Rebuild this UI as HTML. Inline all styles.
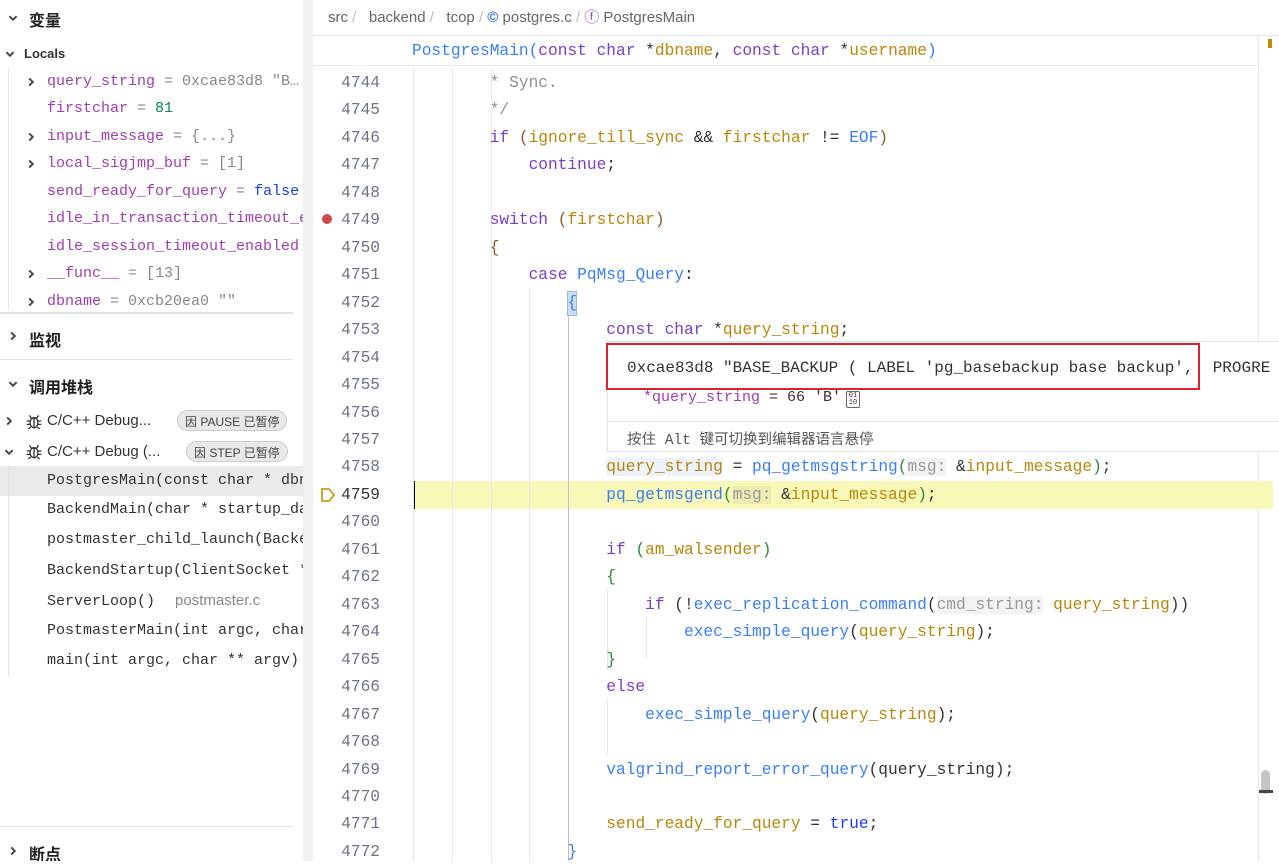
<!DOCTYPE html>
<html><head><meta charset="utf-8"><style>
*{margin:0;padding:0;box-sizing:border-box}
body{width:1279px;height:861px;overflow:hidden;background:#fff;position:relative;font-family:"Liberation Sans","Noto Sans CJK SC",sans-serif;color:#333}
.mono{font-family:"Liberation Mono","Noto Sans CJK SC",monospace}
.abs{position:absolute;white-space:pre}
#side{position:absolute;left:0;top:0;width:303px;height:861px;overflow:hidden}
#split{position:absolute;left:303px;top:0;width:10px;height:861px;background:#f0f0f3}
.h{font-size:16px;font-weight:bold;color:#222}
.var{font-size:15px;color:#a03cb0}
.g{color:#888}
.sep{position:absolute;height:1px;background:#dde0e6;left:0;width:293px}
.frame{font-size:15px;color:#333}
.pill{position:absolute;height:21px;border:1px solid #ccc;border-radius:11px;background:#e8e8ea;font-size:12px;color:#444;padding:2px 7px;white-space:nowrap}
#code{position:absolute;left:313px;top:70px;width:966px;font-size:16.2px;line-height:27.46px}
.ln{position:absolute;left:0;width:67px;text-align:right;color:#6b7585}
.tx{position:absolute;left:99px;white-space:pre}
.kw{color:#7a3fc2}.fn{color:#3b7ef0}.pa{color:#b8860b}.cm{color:#8a8f98}.br{color:#8b5a2b}.num{color:#098658}.bl{color:#1a3fe0}.gr{color:#2e8b3a}.hint{color:#999;background:#f3f3f3}
.guide{position:absolute;top:68px;width:1px;height:793px;background:#e4e7ee}
svg.cv{position:absolute}
</style></head><body>
<svg width="0" height="0" style="position:absolute"><defs>
<symbol id="dn" viewBox="0 0 10 10"><path d="M2 3.5L5 6.5L8 3.5" fill="none" stroke="#444" stroke-width="1.6"/></symbol>
<symbol id="rt" viewBox="0 0 10 10"><path d="M3.5 2L6.5 5L3.5 8" fill="none" stroke="#444" stroke-width="1.6"/></symbol>
<symbol id="bug" viewBox="0 0 16 16"><g fill="none" stroke="#333" stroke-width="1.2"><ellipse cx="8" cy="9.5" rx="3.5" ry="4.5"/><path d="M8 5v9M4.5 8H1.5M11.5 8h3M4.5 11H1.5M11.5 11h3M5 13.5l-2 1.5M11 13.5l2 1.5M5.5 5.5L4 3M10.5 5.5L12 3M6 5.5h4"/></g></symbol>
</defs></svg>
<div id="side">
 <svg class="cv" style="left:7px;top:12px" width="12" height="12"><use href="#dn"/></svg>
 <div class="abs h" style="left:29px;top:7px">变量</div>
 <svg class="cv" style="left:4px;top:48px" width="12" height="12"><use href="#dn"/></svg>
 <div class="abs" style="left:24px;top:46px;font-size:13px;font-weight:bold;color:#333">Locals</div>
 <div class="abs" style="left:8px;top:68px;width:1px;height:242px;background:#e6e6e6"></div>
 <svg class="cv" style="left:25px;top:76px" width="12" height="12"><use href="#rt"/></svg>
 <div class="abs mono var" style="left:47px;top:73px">query_string <span class="g">= 0xcae83d8 "B…</span></div>
 <div class="abs mono var" style="left:47px;top:100px">firstchar <span class="g">=</span> <span class="num">81</span></div>
 <svg class="cv" style="left:25px;top:131px" width="12" height="12"><use href="#rt"/></svg>
 <div class="abs mono var" style="left:47px;top:128px">input_message <span class="g">= {...}</span></div>
 <svg class="cv" style="left:25px;top:158px" width="12" height="12"><use href="#rt"/></svg>
 <div class="abs mono var" style="left:47px;top:155px">local_sigjmp_buf <span class="g">= [1]</span></div>
 <div class="abs mono var" style="left:47px;top:183px">send_ready_for_query <span class="g">=</span> <span class="bl">false</span></div>
 <div class="abs mono var" style="left:47px;top:210px">idle_in_transaction_timeout_enabled</div>
 <div class="abs mono var" style="left:47px;top:238px">idle_session_timeout_enabled</div>
 <svg class="cv" style="left:25px;top:268px" width="12" height="12"><use href="#rt"/></svg>
 <div class="abs mono var" style="left:47px;top:265px">__func__ <span class="g">= [13]</span></div>
 <svg class="cv" style="left:25px;top:296px" width="12" height="12"><use href="#rt"/></svg>
 <div class="abs mono var" style="left:47px;top:293px">dbname <span class="g">= 0xcb20ea0 ""</span></div>
 <div class="sep" style="top:312px;height:2px"></div>
 <svg class="cv" style="left:7px;top:330px" width="12" height="12"><use href="#rt"/></svg>
 <div class="abs h" style="left:29px;top:327px">监视</div>
 <div class="sep" style="top:359px"></div>
 <svg class="cv" style="left:7px;top:378px" width="12" height="12"><use href="#dn"/></svg>
 <div class="abs h" style="left:29px;top:374px">调用堆栈</div>
 <svg class="cv" style="left:3px;top:415px" width="12" height="12"><use href="#rt"/></svg>
 <svg class="cv" style="left:25px;top:412px" width="18" height="18"><use href="#bug"/></svg>
 <div class="abs frame" style="left:47px;top:412px">C/C++ Debug...</div>
 <div class="pill" style="left:177px;top:410px">因 PAUSE 已暂停</div>
 <svg class="cv" style="left:3px;top:446px" width="12" height="12"><use href="#dn"/></svg>
 <svg class="cv" style="left:25px;top:442px" width="18" height="18"><use href="#bug"/></svg>
 <div class="abs frame" style="left:47px;top:443px">C/C++ Debug (...</div>
 <div class="pill" style="left:186px;top:441px">因 STEP 已暂停</div>
 <div class="abs" style="left:0;top:466px;width:303px;height:30px;background:#e9eaee"></div>
 <div class="abs" style="left:8px;top:466px;width:1px;height:210px;background:#e0e0e0"></div>
 <div class="abs mono frame" style="left:47px;top:472px">PostgresMain(const char * dbname</div>
 <div class="abs mono frame" style="left:47px;top:501px">BackendMain(char * startup_data</div>
 <div class="abs mono frame" style="left:47px;top:531px">postmaster_child_launch(Backend</div>
 <div class="abs mono frame" style="left:47px;top:562px">BackendStartup(ClientSocket * c</div>
 <div class="abs mono frame" style="left:47px;top:592px">ServerLoop()<span style="font-family:'Liberation Sans';color:#888;font-size:15px;margin-left:20px">postmaster.c</span></div>
 <div class="abs mono frame" style="left:47px;top:622px">PostmasterMain(int argc, char *</div>
 <div class="abs mono frame" style="left:47px;top:652px">main(int argc, char ** argv)</div>
 <div class="sep" style="top:826px"></div>
 <svg class="cv" style="left:7px;top:845px" width="12" height="12"><use href="#rt"/></svg>
 <div class="abs h" style="left:29px;top:841px">断点</div>
</div>
<div id="split"></div>

<div class="abs" style="left:328px;top:6px;font-size:15px;color:#666">src <span style="color:#bbb">/</span>   backend <span style="color:#bbb">/</span>   tcop <span style="color:#bbb">/</span> <span style="color:#2f6fd8;font-weight:bold">©</span> postgres.c <span style="color:#bbb">/</span> <span style="color:#8a4fc0">ⓕ</span> PostgresMain</div>
<div class="abs" style="left:313px;top:35px;width:966px;height:1px;background:#e6e8ef"></div>
<div class="abs mono" style="left:412px;top:39px;font-size:16.2px;line-height:24px"><span class="fn">PostgresMain</span><span class="fn">(</span><span class="kw">const char</span> *<span class="pa">dbname</span>, <span class="kw">const char</span> *<span class="pa">username</span><span class="fn">)</span></div>
<div class="abs" style="left:313px;top:65px;width:946px;height:1px;background:#e6e8ef"></div>
<div class="abs" style="left:1258px;top:36px;width:1px;height:825px;background:#e6e6e6"></div>
<div class="abs" style="left:1268px;top:39px;width:4px;height:9px;background:#c28a00"></div>
<div class="abs" style="left:1261px;top:770px;width:9px;height:24px;border-radius:5px;background:#c4c4c4"></div>
<div class="abs" style="left:1259px;top:790px;width:14px;height:3px;background:#444"></div>

<div class="abs" style="left:413px;top:481px;width:860px;height:27.5px;background:#f8f8b8"></div>
<div class="abs" style="left:413px;top:481px;width:2px;height:27.5px;background:#000"></div>

<div class="guide" style="left:413px"></div>
<div class="guide" style="left:452px"></div>
<div class="guide" style="left:491px"></div>
<div class="guide" style="left:529px;top:288px;height:573px"></div>
<div class="guide" style="left:568px;top:315px;height:546px;background:#b8c0d0"></div>
<div class="guide" style="left:607px;top:590px;height:80px"></div>
<div class="guide" style="left:646px;top:617px;height:40px"></div>
<div class="guide" style="left:607px;top:699px;height:55px"></div>
<div class="abs" style="left:567px;top:291px;width:10px;height:25px;background:#cfdcf5;border:1px solid #9bb"></div>

<div id="code" class="mono">
<div class="ln" style="top:0">4744</div><div class="tx cm" style="top:0">        * Sync.</div>
<div class="ln" style="top:27.46px">4745</div><div class="tx cm" style="top:27.46px">        */</div>
<div class="ln" style="top:54.92px">4746</div><div class="tx" style="top:54.92px">        <span class="kw">if</span> <span class="br">(</span><span class="pa">ignore_till_sync</span> &amp;&amp; <span class="pa">firstchar</span> != <span class="fn">EOF</span><span class="br">)</span></div>
<div class="ln" style="top:82.38px">4747</div><div class="tx" style="top:82.38px">            <span class="kw">continue</span>;</div>
<div class="ln" style="top:109.84px">4748</div>
<div class="ln" style="top:137.3px">4749</div><div class="abs" style="left:9px;top:144px;width:10px;height:10px;border-radius:50%;background:#d04848"></div><div class="tx" style="top:137.3px">        <span class="kw">switch</span> <span class="br">(</span><span class="pa">firstchar</span><span class="br">)</span></div>
<div class="ln" style="top:164.76px">4750</div><div class="tx br" style="top:164.76px">        {</div>
<div class="ln" style="top:192.22px">4751</div><div class="tx" style="top:192.22px">            <span class="kw">case</span> <span class="fn">PqMsg_Query</span>:</div>
<div class="ln" style="top:219.68px">4752</div><div class="tx fn" style="top:219.68px">                {</div>
<div class="ln" style="top:247.14px">4753</div><div class="tx" style="top:247.14px">                    <span class="kw">const char</span> *<span class="pa">query_string</span>;</div>
<div class="ln" style="top:274.6px">4754</div>
<div class="ln" style="top:302.06px">4755</div>
<div class="ln" style="top:329.52px">4756</div>
<div class="ln" style="top:356.98px">4757</div>
<div class="ln" style="top:384.44px">4758</div><div class="tx" style="top:384.44px">                    <span class="pa" style="background:#eef3fb">query_string</span> = <span class="fn">pq_getmsgstring</span><span class="gr">(</span><span class="hint">msg:</span> &amp;<span class="pa">input_message</span><span class="gr">)</span>;</div>
<div class="ln" style="top:411.9px;color:#333">4759</div><div class="tx" style="top:411.9px">                    <span class="fn">pq_getmsgend</span><span class="gr">(</span><span class="hint" style="background:#ecebb0">msg:</span> &amp;<span class="pa">input_message</span><span class="gr">)</span>;</div>
<div class="ln" style="top:439.36px">4760</div>
<div class="ln" style="top:466.82px">4761</div><div class="tx" style="top:466.82px">                    <span class="kw">if</span> <span class="gr">(</span><span class="pa">am_walsender</span><span class="gr">)</span></div>
<div class="ln" style="top:494.28px">4762</div><div class="tx gr" style="top:494.28px">                    {</div>
<div class="ln" style="top:521.74px">4763</div><div class="tx" style="top:521.74px">                        <span class="kw">if</span> (!<span class="fn">exec_replication_command</span>(<span class="hint">cmd_string:</span> <span class="pa">query_string</span>))</div>
<div class="ln" style="top:549.2px">4764</div><div class="tx" style="top:549.2px">                            <span class="fn">exec_simple_query</span>(<span class="pa">query_string</span>);</div>
<div class="ln" style="top:576.66px">4765</div><div class="tx gr" style="top:576.66px">                    }</div>
<div class="ln" style="top:604.12px">4766</div><div class="tx kw" style="top:604.12px">                    else</div>
<div class="ln" style="top:631.58px">4767</div><div class="tx" style="top:631.58px">                        <span class="fn">exec_simple_query</span>(<span class="pa">query_string</span>);</div>
<div class="ln" style="top:659.04px">4768</div>
<div class="ln" style="top:686.5px">4769</div><div class="tx" style="top:686.5px">                    <span class="fn">valgrind_report_error_query</span>(query_string);</div>
<div class="ln" style="top:713.96px">4770</div>
<div class="ln" style="top:741.42px">4771</div><div class="tx" style="top:741.42px">                    <span class="pa">send_ready_for_query</span> = <span class="bl">true</span>;</div>
<div class="ln" style="top:768.88px">4772</div><div class="tx fn" style="top:768.88px">                }</div>
</div>
<svg class="abs" style="left:320px;top:487px" width="16" height="16" viewBox="0 0 16 16"><path d="M2 2H9L14 8L9 14H2Z" fill="none" stroke="#d09a1a" stroke-width="1.8"/></svg>

<div class="abs" style="left:607px;top:341px;width:672px;height:111px;background:#fff;border:1px solid #e3e3e8;border-right:none"></div>
<div class="abs mono" style="left:627px;top:359px;font-size:16px;color:#333">0xcae83d8 "BASE_BACKUP ( LABEL 'pg_basebackup base backup',  PROGRE</div>
<div class="abs mono" style="left:643px;top:389px;font-size:15px;color:#333"><span class="var">*query_string</span> = 66 'B'</div>
<div class="abs" style="left:846px;top:391px;width:14px;height:17px;border:1px solid #666;border-radius:2px;font-size:7px;line-height:7px;text-align:center;font-family:'Liberation Mono';padding-top:1px;white-space:normal">01<br>10</div>
<div class="abs" style="left:607px;top:421px;width:672px;height:1px;background:#e6e6e6"></div>
<div class="abs mono" style="left:627px;top:428px;font-size:14.5px;color:#555">按住 Alt 键可切换到编辑器语言悬停</div>
<div class="abs" style="left:606px;top:343px;width:594px;height:47px;border:2px solid #e0202a"></div>
</body></html>
